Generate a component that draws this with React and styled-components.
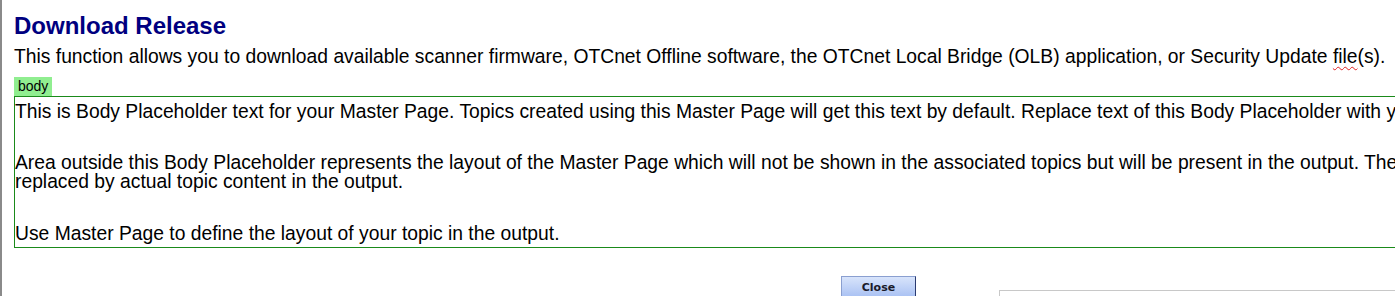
import React from 'react';
import styled, { createGlobalStyle } from 'styled-components';

const GlobalStyle = createGlobalStyle`
  html, body {
    margin: 0;
    padding: 0;
    background: #ffffff;
    overflow: hidden;
  }
  body {
    font-family: "Liberation Sans", Arial, sans-serif;
    color: #000000;
  }
`;

const Page = styled.div`
  width: 1395px;
  height: 296px;
  box-sizing: border-box;
  border-left: 2px solid #8a8a8a;
  padding: 12px 0 0 12px;
  overflow: hidden;
`;

const Title = styled.h1`
  margin: 0;
  font-size: 24px;
  line-height: 28px;
  font-weight: bold;
  color: #000080;
`;

const Intro = styled.p`
  margin: 6px 0 0 0;
  font-size: 19.3px;
  line-height: 22px;
  white-space: nowrap;
`;

const Misspelled = styled.span`
  text-decoration: underline wavy #e02020;
  text-decoration-thickness: 1px;
  text-underline-offset: 3px;
`;

const Placeholder = styled.section`
  margin-top: 9px;
  display: flex;
  flex-direction: column;
`;

const Tag = styled.span`
  align-self: flex-start;
  background: #90ee90;
  font-size: 14px;
  line-height: 19px;
  padding: 0 4px;
`;

const BodyBox = styled.div`
  border: 1px solid #1a8a1a;
  border-right: none;
  height: 152px;
  box-sizing: border-box;
  padding: 5px 0 0 0;
  font-size: 19.3px;
  line-height: 19px;
  white-space: nowrap;
  overflow: hidden;
`;

const Para = styled.p`
  margin: 0 0 ${p => p.$gap}px 0;
`;

const Footer = styled.div`
  display: flex;
  align-items: flex-start;
  padding-top: 28px;
`;

const CloseButton = styled.button`
  margin-left: 827px;
  width: 75px;
  height: 22px;
  border: 1px solid #8a9fd0;
  border-right-color: #2a3a70;
  background: linear-gradient(#d8e4fb, #a9c1f3);
  font-family: Tahoma, "DejaVu Sans", sans-serif;
  font-weight: bold;
  font-size: 11px;
  color: #1a1a2a;
  padding: 0;
`;

const Panel = styled.div`
  margin-left: 83px;
  margin-top: 14px;
  flex: 1;
  height: 30px;
  border-top: 1px solid #c8c8c8;
  border-left: 1px solid #c8c8c8;
`;

export default function App() {
  return (
    <>
      <GlobalStyle />
      <Page>
        <Title>Download Release</Title>
        <Intro>
          This function allows you to download available scanner firmware, OTCnet Offline software, the OTCnet Local Bridge (OLB) application, or Security Update <Misspelled>file</Misspelled>(s).
        </Intro>
        <Placeholder>
          <Tag>body</Tag>
          <BodyBox>
            <Para $gap={32}>
              This is Body Placeholder text for your Master Page. Topics created using this Master Page will get this text by default. Replace text of this Body Placeholder with your own content.
            </Para>
            <Para $gap={0}>
              Area outside this Body Placeholder represents the layout of the Master Page which will not be shown in the associated topics but will be present in the output. The Body Placeholder will be
            </Para>
            <Para $gap={33}>replaced by actual topic content in the output.</Para>
            <Para $gap={0}>Use Master Page to define the layout of your topic in the output.</Para>
          </BodyBox>
        </Placeholder>
        <Footer>
          <CloseButton>Close</CloseButton>
          <Panel />
        </Footer>
      </Page>
    </>
  );
}
